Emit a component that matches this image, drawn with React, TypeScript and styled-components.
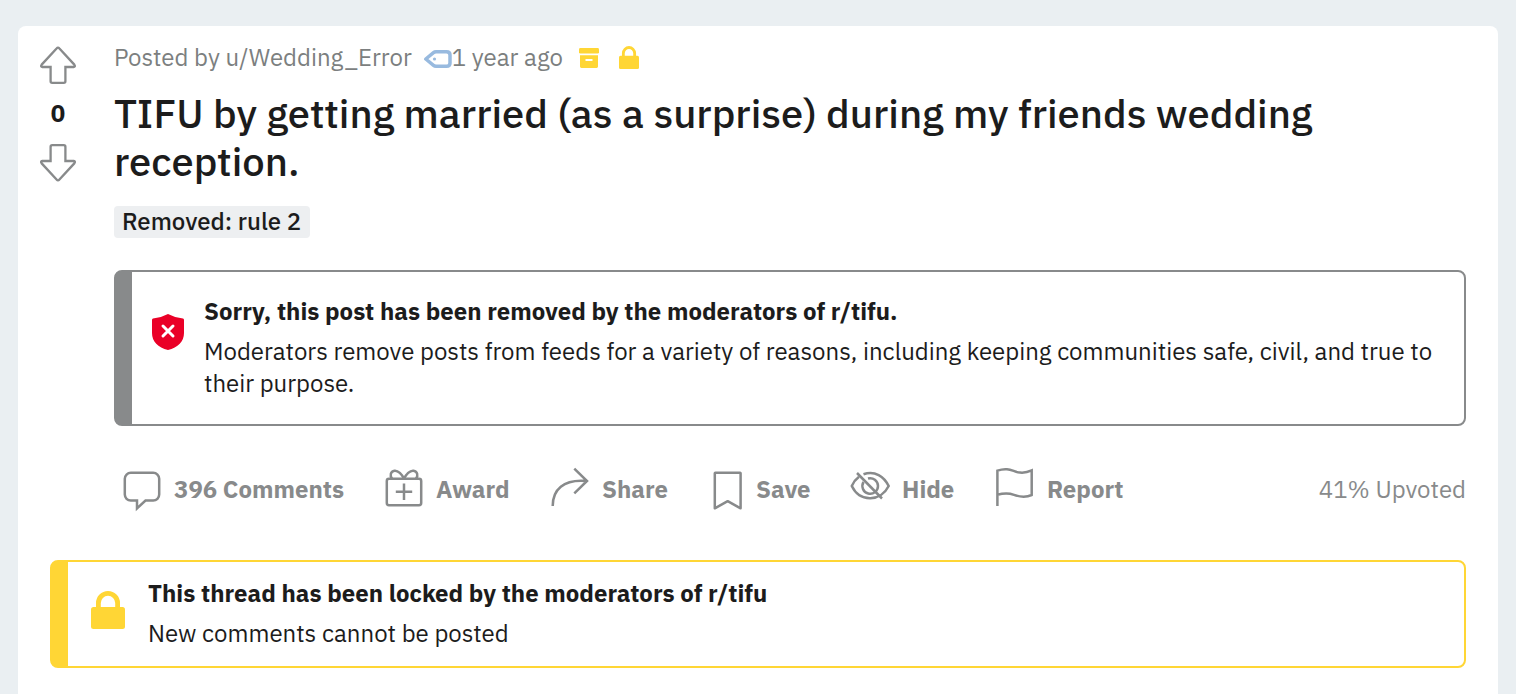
import React from "react";
import styled, { createGlobalStyle } from "styled-components";

const Colors = {
  PAGE: "#eaeff2",
  WHITE: "#ffffff",
  TEXT: "#1c1c1c",
  META: "#7c7f80",
  ACTION: "#888a8b",
  FLAIR: "#edeff1",
  RED: "#ea0027",
  YELLOW: "#ffd635",
  TAG: "#98badf",
};

const VoteArrow = ({ down }: { down?: boolean }) => (
  <Arrow viewBox="0 0 40 40" down={down}>
    <path d="M20 2.7Q20.7 2.7 21.200 3.300L36.300 19.600Q37.800 21.700 35.700 22H27.400V36.200Q27.400 37.800 25.800 37.800H14.200Q12.600 37.800 12.600 36.200V22H4.300Q2.200 21.700 3.700 19.600L18.800 3.300Q19.300 2.700 20 2.700Z" />
  </Arrow>
);

const LockIcon = () => (
  <svg viewBox="0 0 34 38" preserveAspectRatio="none">
    <path
      d="M7.4 17V12a9.600 9.600 0 0 1 19.200 0V17"
      fill="none"
      stroke="currentColor"
      strokeWidth="4.8"
    />
    <rect y="16" width="34" height="22" rx="2.5" fill="currentColor" />
  </svg>
);

const ArchiveIcon = () => (
  <svg viewBox="0 0 20 20">
    <rect width="20" height="5.6" rx="1.4" fill="currentColor" />
    <path
      fillRule="evenodd"
      fill="currentColor"
      d="M1 7.2h18v11.3a1.4 1.4 0 0 1-1.4 1.4H2.4A1.4 1.4 0 0 1 1 18.500zM6.500 11v2h7v-2z"
    />
  </svg>
);

const TagIcon = () => (
  <svg viewBox="0 0 28 18" fill="none" stroke="currentColor">
    <path
      d="M1.800 9 9.500 2.600Q10.500 1.800 12 1.800H22.500Q26 1.800 26 5.100V12.900Q26 16.200 22.500 16.200H12Q10.500 16.200 9.500 15.400Z"
      strokeWidth="3.500"
      strokeLinejoin="round"
    />
    <circle cx="10.500" cy="9" r="1.600" fill="currentColor" stroke="none" />
  </svg>
);

const ShieldIcon = () => (
  <svg viewBox="0 0 32 36">
    <path
      d="M16 0Q22.500 3.600 31 4.600 32 4.800 32 6V19C32 27.500 26 33.500 16 36 6 33.500 0 27.500 0 19V6Q0 4.800 1 4.600 9.500 3.600 16 0Z"
      fill={Colors.RED}
    />
    <path
      d="M11 12 21 22M21 12 11 22"
      stroke="#fff"
      strokeWidth="3"
      strokeLinecap="round"
    />
  </svg>
);

const CommentIcon = () => (
  <ActionIcon>
    <path d="M23.500 32.600H31.200a6 6 0 0 0 6-6V10.800a6 6 0 0 0-6-6H8.800a6 6 0 0 0-6 6v15.800a6 6 0 0 0 6 6h6.200v7.800z" />
  </ActionIcon>
);

const AwardIcon = () => (
  <ActionIcon>
    <rect x="2.800" y="10.800" width="34.400" height="26.400" rx="2.200" />
    <path d="M20 15.500v16.400M11.800 23.700h16.400" />
    <path d="M20 10.800C18 6.500 14 2.200 10.500 2.700 6.500 3.300 5.600 7.500 8 10.800M20 10.800C22 6.500 26 2.200 29.500 2.700 33.500 3.300 34.400 7.500 32 10.800" />
  </ActionIcon>
);

const ShareIcon = () => (
  <ActionIcon>
    <path d="M2.700 38C2.700 22 13 11 36.500 13M24.300.7 37 13 24.300 25.300" />
  </ActionIcon>
);

const SaveIcon = () => (
  <ActionIcon>
    <path
      d="M10.800 5.300Q10.800 4.800 11.300 4.800H36.100Q36.600 4.800 36.600 5.300V40.300L23.700 33.200 10.800 40.300Z"
      strokeLinejoin="round"
    />
  </ActionIcon>
);

const HideIcon = () => (
  <ActionIcon>
    <path d="M13.500 6.300C25 2.300 34 8.500 38.700 18 31 33.500 10 35 1.800 18 3.600 14 6 11 9 8.800" />
    <path d="M18 10.500A7.800 7.800 0 1 1 13.500 14" />
    <path d="M7 5 32 30.500" />
  </ActionIcon>
);

const ReportIcon = () => (
  <ActionIcon>
    <path d="M2.400 38V2.600C13-1 17 3 23 4.300Q30 5.600 36.700 2.400V27C30 30 25 29 19 26.800 13 24.500 9 24.800 2.400 26.800" />
  </ActionIcon>
);

const actions = [
  { label: "396 Comments", Icon: CommentIcon },
  { label: "Award", Icon: AwardIcon },
  { label: "Share", Icon: ShareIcon },
  { label: "Save", Icon: SaveIcon },
  { label: "Hide", Icon: HideIcon },
  { label: "Report", Icon: ReportIcon },
];

const App = () => (
  <>
    <GlobalStyle />
    <Card>
      <Post>
        <Votes>
          <VoteArrow />
          <Score>0</Score>
          <VoteArrow down />
        </Votes>
        <Content>
          <Byline>
            <Label>Posted by u/Wedding_Error</Label>
            <Tag>
              <TagIcon />
            </Tag>
            <Label>1 year ago</Label>
            <Badges>
              <Badge height={20}>
                <ArchiveIcon />
              </Badge>
              <Badge height={23}>
                <LockIcon />
              </Badge>
            </Badges>
          </Byline>
          <Title>
            TIFU by getting married (as a surprise) during my friends wedding
            reception.
          </Title>
          <Flair>Removed: rule 2</Flair>
          <RemovedNotice>
            <ShieldIcon />
            <div>
              <NoticeTitle>
                Sorry, this post has been removed by the moderators of r/tifu.
              </NoticeTitle>
              <NoticeText>
                Moderators remove posts from feeds for a variety of reasons,
                including keeping communities safe, civil, and true to their
                purpose.
              </NoticeText>
            </div>
          </RemovedNotice>
          <Actions>
            {actions.map(({ label, Icon }) => (
              <Action key={label}>
                <Icon />
                <Label>{label}</Label>
              </Action>
            ))}
            <Upvoted>41% Upvoted</Upvoted>
          </Actions>
        </Content>
      </Post>
      <LockedNotice>
        <LockIcon />
        <div>
          <NoticeTitle>
            This thread has been locked by the moderators of r/tifu
          </NoticeTitle>
          <NoticeText>New comments cannot be posted</NoticeText>
        </div>
      </LockedNotice>
    </Card>
  </>
);

const GlobalStyle = createGlobalStyle`
  * {
    box-sizing: border-box;
  }
  body {
    margin: 0;
    overflow: hidden;
    background-color: ${Colors.PAGE};
    color: ${Colors.TEXT};
    font-family: "IBM Plex Sans", Roboto, "Noto Sans", sans-serif;
    font-size: 24px;
    line-height: 32px;
  }
  svg {
    display: block;
    flex-shrink: 0;
  }
`;

const Card = styled.main`
  margin: 26px 18px 0;
  height: 700px;
  border-radius: 8px;
  background-color: ${Colors.WHITE};
`;

const Post = styled.article`
  display: flex;
`;

const Votes = styled.div`
  display: flex;
  flex-direction: column;
  align-items: center;
  width: 80px;
  padding-top: 19px;
`;

const Arrow = styled.svg.withConfig({
  shouldForwardProp: (prop) => prop !== "down",
})<ArrowProps>`
  width: 40px;
  height: 40px;
  fill: none;
  stroke: ${Colors.ACTION};
  stroke-width: 2.3;
  transform: ${({ down }) => (down ? "scaleY(-1)" : "none")};
`;

const Score = styled.div`
  margin: 12px 0 14px;
  font-weight: 700;
`;

const Content = styled.div`
  flex: 1;
  padding: 16px 32px 0 16px;
`;

const Label = styled.span`
  padding-bottom: 2px;
  white-space: nowrap;
`;

const Byline = styled.div`
  display: flex;
  align-items: center;
  height: 32px;
  color: ${Colors.META};
`;

const Tag = styled.span`
  margin: 2px 0 0 12px;
  color: ${Colors.TAG};

  svg {
    width: 28px;
    height: 18px;
  }
`;

const Badges = styled.div`
  display: flex;
  align-items: flex-end;
  gap: 20px;
  height: 23px;
  margin: 0 0 1px 16px;
  color: ${Colors.YELLOW};
`;

const Badge = styled.span<BadgeProps>`
  padding-bottom: ${({ height }) => (height < 23 ? 1 : 0)}px;

  svg {
    width: 20px;
    height: ${({ height }) => height}px;
  }
`;

const Title = styled.h1`
  margin: 15px 0 21px;
  font-size: 40px;
  font-weight: 500;
  line-height: 48px;
`;

const Flair = styled.div`
  width: 196px;
  padding: 0 8px 2px;
  border-radius: 4px;
  background-color: ${Colors.FLAIR};
  font-weight: 500;
  line-height: 30px;
`;

const Notice = styled.section`
  display: flex;
  border: 2px solid;
  border-left-width: 18px;
  border-radius: 8px;
`;

const RemovedNotice = styled(Notice)`
  height: 156px;
  margin-top: 32px;
  padding: 23px 20px;
  gap: 20px;
  border-color: ${Colors.ACTION};

  svg {
    width: 32px;
    height: 36px;
    margin-top: 19px;
  }
`;

const LockedNotice = styled(Notice)`
  height: 108px;
  margin: 48px 32px 0;
  padding: 15px 23px;
  gap: 23px;
  border-color: ${Colors.YELLOW};

  svg {
    width: 34px;
    height: 38px;
    margin-top: 14px;
    color: ${Colors.YELLOW};
  }
`;

const NoticeTitle = styled.div`
  font-weight: 700;
`;

const NoticeText = styled.div`
  margin-top: 8px;
`;

const Actions = styled.div`
  display: grid;
  grid-template-columns: 262px 166px 154px 146px 145px 200px 1fr;
  align-items: center;
  height: 44px;
  margin-top: 42px;
  padding-left: 8px;
  color: ${Colors.ACTION};
`;

const Action = styled.div`
  display: flex;
  align-items: center;
  gap: 12px;
  font-weight: 700;
`;

const ActionIcon = styled.svg.attrs({ viewBox: "0 0 40 44" })`
  width: 40px;
  height: 44px;
  overflow: visible;
  fill: none;
  stroke: currentColor;
  stroke-width: 2.5;
`;

const Upvoted = styled.div`
  justify-self: end;
  padding-bottom: 2px;
`;

type ArrowProps = {
  down?: boolean;
};

type BadgeProps = {
  height: number;
};

export default App;
